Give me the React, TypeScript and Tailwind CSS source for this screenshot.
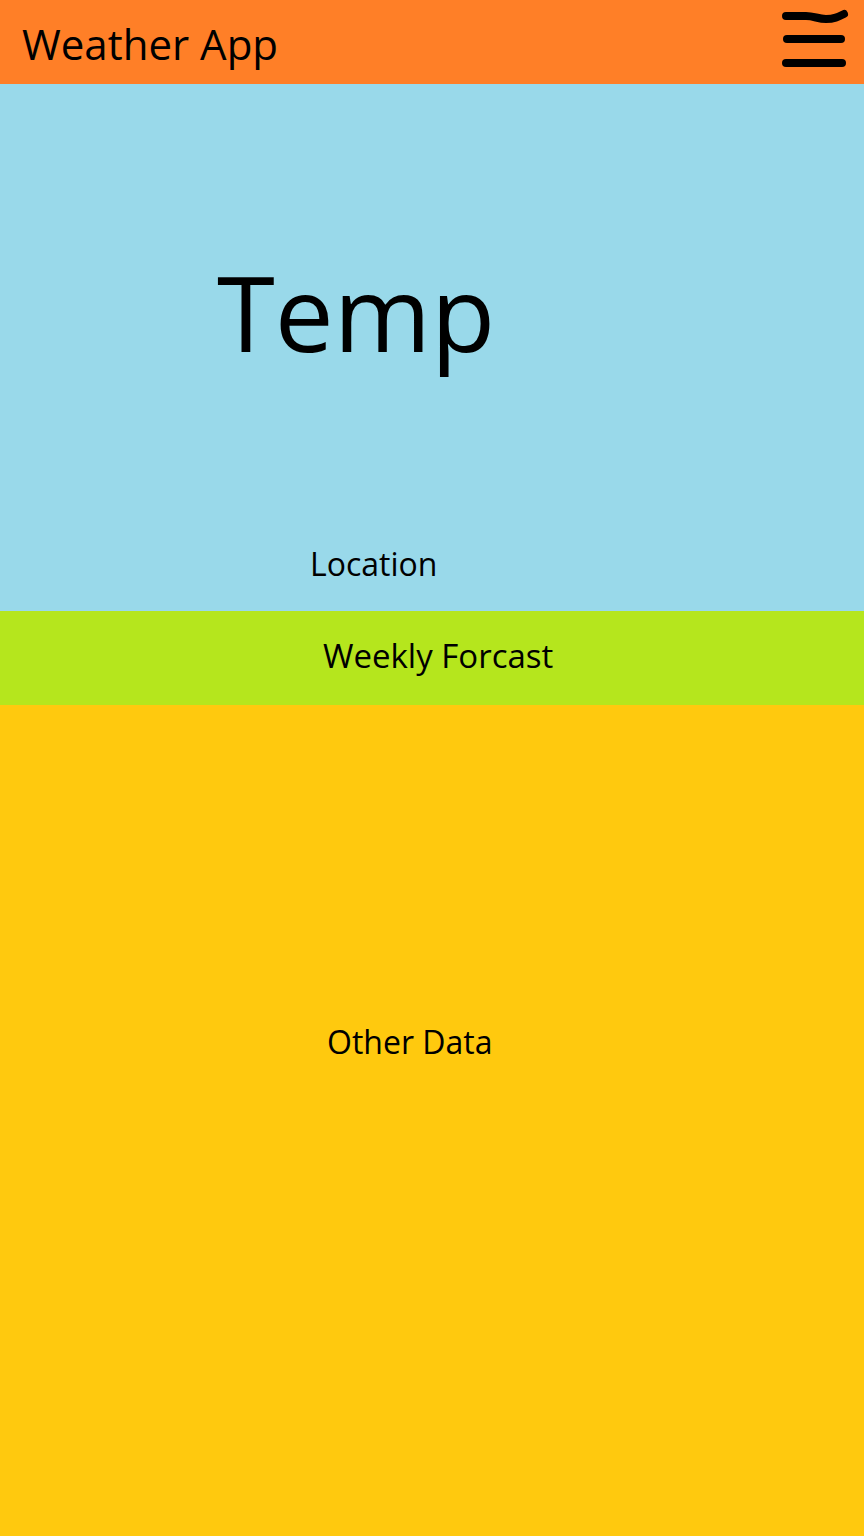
export default function App() {
  return (
    <div className="flex min-h-[1536px] w-full flex-col font-['Open_Sans',sans-serif] text-black">
      <header className="flex h-[84px] items-center justify-between bg-[#ff7f27] pl-[22px] pr-[14px]">
        <h1 className="pt-[3px] text-[42px] leading-none">Weather App</h1>
        <svg width="70" height="70" viewBox="0 0 70 70" fill="none" stroke="black" strokeWidth="8" strokeLinecap="round">
          <path d="M6 9 H26 C34 9 38 12 46 12 C54 12 58 10 64 7" />
          <path d="M7 32 H61" />
          <path d="M6 56 H62" />
        </svg>
      </header>

      <section className="flex h-[527px] flex-col bg-[#99d9ea]">
        <p className="pl-[217px] pt-[175px] text-[105px] leading-none">Temp</p>
        <p className="mt-auto pb-[31px] pl-[310px] text-[32px] leading-none">Location</p>
      </section>

      <section className="flex h-[94px] items-center bg-[#b5e61d] pb-[6px] pl-[323px]">
        <p className="text-[33px] leading-none">Weekly Forcast</p>
      </section>

      <section className="flex flex-1 flex-col bg-[#ffc90e]">
        <p className="pl-[327px] pt-[321px] text-[32px] leading-none">Other Data</p>
      </section>
    </div>
  );
}
